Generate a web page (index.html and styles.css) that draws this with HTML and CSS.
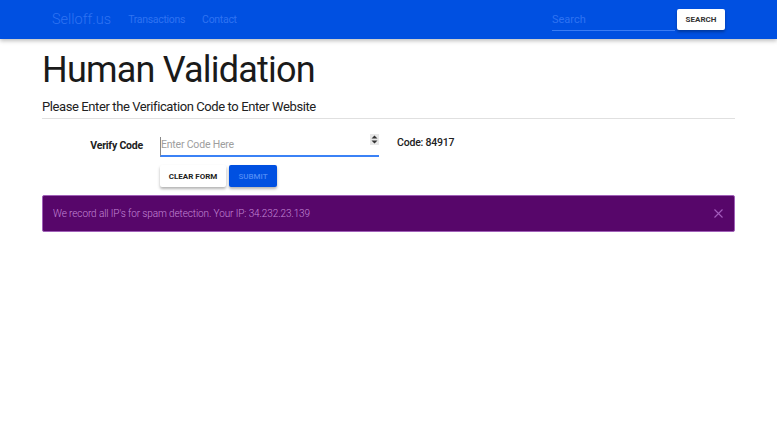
FILE: index.html
```html
<!DOCTYPE html>
<html lang="en">
<head>
    <meta charset="UTF-8">
    <meta name="viewport" content="width=device-width, initial-scale=1.0">
    <title>Human Validation - Selloff.us</title>
    <link rel="stylesheet" href="styles.css">
</head>
<body>

    <!-- Top Navigation -->
    <nav class="navbar">
        <div class="nav-inner">
            <a class="brand" href="#">Selloff.us</a>
            <a class="nav-link" href="#">Transactions</a>
            <a class="nav-link" href="#">Contact</a>
            <form class="search-form">
                <input type="text" class="search-input" placeholder="Search">
                <button type="button" class="search-button">SEARCH</button>
            </form>
        </div>
    </nav>

    <!-- Main Content -->
    <div class="container">
        <h1>Human Validation</h1>
        <h5>Please Enter the Verification Code to Enter Website</h5>
        <hr>

        <form class="verify-form">
            <label for="code">Verify Code</label>
            <div class="field">
                <input type="text" id="code" placeholder="Enter Code Here">
                <span class="spinner">
                    <svg width="9" height="11" viewBox="0 0 9 11"><path d="M4.5 1.5 L7.5 4.5 H1.5 Z M4.5 9.5 L7.5 6.5 H1.5 Z" fill="#333"/></svg>
                </span>
            </div>
            <div class="code-hint">Code: 84917</div>
            <div class="buttons">
                <button type="button" class="btn btn-light">CLEAR FORM</button>
                <button type="button" class="btn btn-blue">SUBMIT</button>
            </div>
        </form>

        <div class="alert">
            <span>We record all IP's for spam detection. Your IP: 34.232.23.139</span>
            <span class="close">
                <svg width="9" height="9" viewBox="0 0 9 9"><path d="M0.5 0.5 L8.5 8.5 M8.5 0.5 L0.5 8.5" stroke="#a35cbc" stroke-width="1.1"/></svg>
            </span>
        </div>
    </div>

</body>
</html>
```

FILE: styles.css
```css
body {
    font-family: 'Roboto', 'Liberation Sans', sans-serif;
    margin: 0;
    padding: 0;
    background-color: #ffffff;
    color: #212121;
}
a {
    text-decoration: none;
}
.navbar {
    background-color: #0050e1;
    height: 39px;
    box-shadow: 0 2px 4px rgba(0, 0, 0, 0.25);
}
.nav-inner {
    display: flex;
    align-items: center;
    height: 39px;
    padding: 0 52px;
}
.brand {
    font-size: 14.5px;
    color: #2f73f2;
    margin-right: 17px;
    font-weight: 300;
}
.nav-link {
    font-size: 10.5px;
    letter-spacing: -0.3px;
    color: #2f73f2;
    margin-right: 17px;
}
.search-form {
    margin-left: auto;
    display: flex;
    align-items: center;
}
.search-input {
    width: 123px;
    border: none;
    border-bottom: 1px solid #3a7cf4;
    background: transparent;
    font-family: inherit;
    font-size: 11px;
    padding: 4px 0;
    margin-right: 2px;
    color: #ffffff;
    outline: none;
}
.search-input::placeholder {
    color: #2f73f2;
}
.search-button {
    background: #ffffff;
    border: none;
    border-radius: 2px;
    height: 21px;
    width: 48px;
    font-family: inherit;
    font-size: 8px;
    font-weight: 700;
    color: #333333;
    box-shadow: 0 2px 3px rgba(0, 0, 0, 0.3);
    padding: 0;
}
.container {
    padding: 0 42px;
}
h1 {
    font-size: 36px;
    letter-spacing: -0.8px;
    font-weight: 400;
    margin: 9px 0 0;
    line-height: 44px;
    color: #1a1a1a;
}
h5 {
    font-size: 13px;
    letter-spacing: -0.4px;
    font-weight: 400;
    margin: 7px 0 0;
    line-height: 16px;
}
hr {
    border: none;
    border-top: 1px solid #e0e0e0;
    margin: 3px 0 0;
}
.verify-form {
    display: grid;
    grid-template-columns: 101px 219px auto;
    column-gap: 17px;
    row-gap: 8px;
    margin-top: 14px;
}
label {
    font-size: 10.5px;
    letter-spacing: -0.2px;
    font-weight: 700;
    text-align: right;
    padding-top: 6px;
}
.field {
    position: relative;
}
.field input {
    width: 100%;
    box-sizing: border-box;
    border: none;
    border-bottom: 2px solid #3b82f6;
    border-left: 1px solid #888;
    font-family: inherit;
    font-size: 10.5px;
    letter-spacing: -0.2px;
    padding: 1px 0 4px;
    outline: none;
}
.field input::placeholder {
    color: #9e9e9e;
}
.spinner {
    position: absolute;
    right: 0;
    top: 1px;
    background: #e8e8e8;
    width: 9px;
    height: 11px;
    line-height: 0;
}
.code-hint {
    font-size: 10.5px;
    letter-spacing: -0.2px;
    font-weight: 500;
    margin-left: 1px;
    margin-top: 3px;
}
.buttons {
    grid-column: 2 / 4;
    display: flex;
    gap: 3px;
}
.btn {
    border: none;
    border-radius: 2px;
    height: 22px;
    font-family: inherit;
    font-size: 8px;
    font-weight: 700;
    padding: 0;
    white-space: nowrap;
    box-shadow: 0 2px 3px rgba(0, 0, 0, 0.3);
}
.btn-light {
    background: #ffffff;
    color: #222222;
    width: 66px;
}
.btn-blue {
    background: #0050e1;
    color: #4f8bf5;
    font-weight: 500;
    width: 48px;
}
.alert {
    margin-top: 8px;
    background-color: #57066a;
    border: 1px solid #a060b8;
    border-radius: 2px;
    height: 37px;
    box-sizing: border-box;
    display: flex;
    align-items: center;
    justify-content: space-between;
    padding: 0 10px;
    font-size: 10px;
    letter-spacing: -0.1px;
    font-weight: 300;
    color: #c488d6;
}
.close {
    line-height: 0;
    margin-right: 1px;
}
```
